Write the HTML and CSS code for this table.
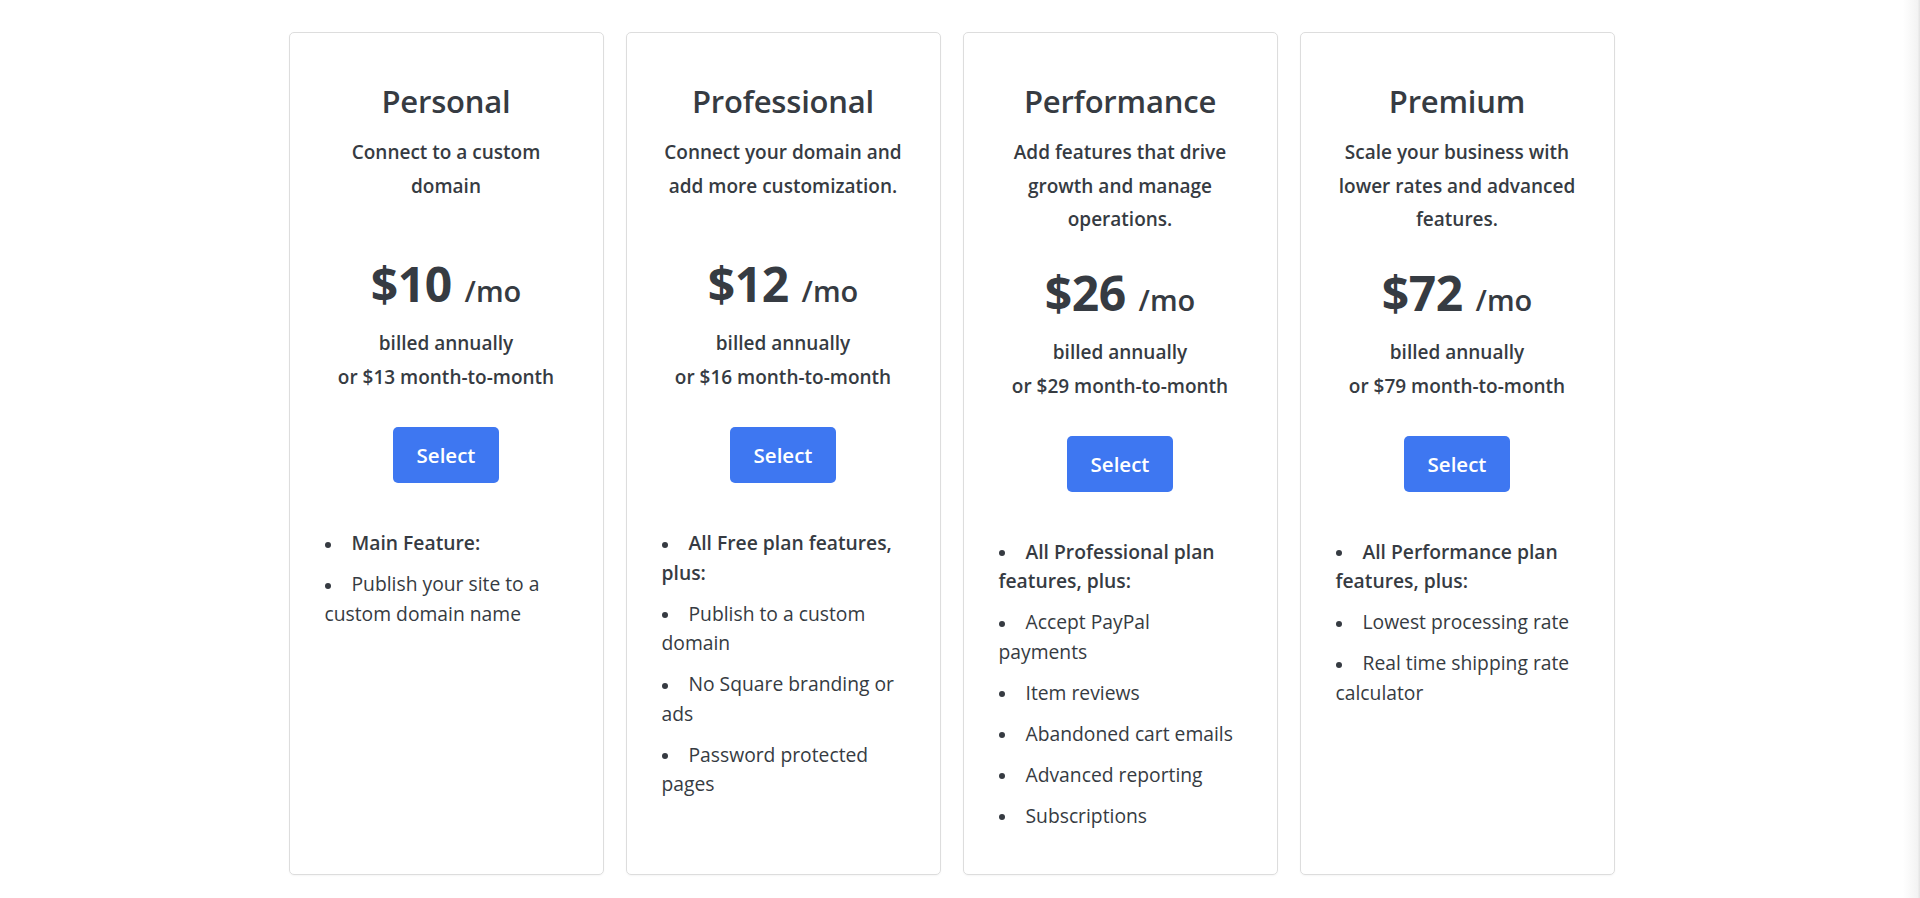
FILE: index.html
```html
<!DOCTYPE html>
<html lang="en">
<head>
<meta charset="utf-8">
<title>Pricing</title>
<link rel="stylesheet" href="styles.css">
</head>
<body>
<div class="page">
  <main class="main">
    <section class="plans">
      <article class="card">
        <h2 class="title">Personal</h2>
        <p class="desc">Connect to a custom domain</p>
        <div class="price"><span class="amount">$10</span><span class="per">/mo</span></div>
        <p class="billing">billed annually<br>or $13 month-to-month</p>
        <button class="btn">Select</button>
        <ul class="features">
          <li class="strong">Main Feature:</li>
          <li>Publish your site to a custom domain name</li>
        </ul>
      </article>
      <article class="card">
        <h2 class="title">Professional</h2>
        <p class="desc">Connect your domain and add more customization.</p>
        <div class="price"><span class="amount">$12</span><span class="per">/mo</span></div>
        <p class="billing">billed annually<br>or $16 month-to-month</p>
        <button class="btn">Select</button>
        <ul class="features">
          <li class="strong">All Free plan features, plus:</li>
          <li>Publish to a custom domain</li>
          <li>No Square branding or ads</li>
          <li>Password protected pages</li>
        </ul>
      </article>
      <article class="card">
        <h2 class="title">Performance</h2>
        <p class="desc">Add features that drive growth and manage operations.</p>
        <div class="price"><span class="amount">$26</span><span class="per">/mo</span></div>
        <p class="billing">billed annually<br>or $29 month-to-month</p>
        <button class="btn">Select</button>
        <ul class="features">
          <li class="strong">All Professional plan features, plus:</li>
          <li>Accept PayPal payments</li>
          <li>Item reviews</li>
          <li>Abandoned cart emails</li>
          <li>Advanced reporting</li>
          <li>Subscriptions</li>
        </ul>
      </article>
      <article class="card">
        <h2 class="title">Premium</h2>
        <p class="desc">Scale your business with lower rates and advanced features.</p>
        <div class="price"><span class="amount">$72</span><span class="per">/mo</span></div>
        <p class="billing">billed annually<br>or $79 month-to-month</p>
        <button class="btn">Select</button>
        <ul class="features">
          <li class="strong">All Performance plan features, plus:</li>
          <li>Lowest processing rate</li>
          <li>Real time shipping rate calculator</li>
        </ul>
      </article>
    </section>
  </main>
  <div class="scrollbar"></div>
</div>
</body>
</html>
```

FILE: styles.css
```css
* { box-sizing: border-box; }

html, body {
  margin: 0;
  padding: 0;
  height: 100%;
  background: #ffffff;
}

body {
  font-family: "Open Sans", "Liberation Sans", sans-serif;
  color: #363b42;
  overflow: hidden;
}

.page {
  display: flex;
  height: 898px;
}

.main {
  flex: 1;
  padding-top: 32px;
}

.scrollbar {
  width: 17px;
  background: linear-gradient(to right, #ffffff 0%, #f3f3f3 85%, #e2e2e2 100%);
}

.plans {
  display: flex;
  justify-content: center;
  gap: 22px;
  align-items: stretch;
}

.card {
  width: 315px;
  border: 1px solid #dddddd;
  border-radius: 5px;
  padding: 48px 35px 32px;
  display: flex;
  flex-direction: column;
  align-items: center;
  text-align: center;
  box-shadow: 0 1px 2px rgba(0, 0, 0, 0.04);
}

.title {
  margin: 0;
  font-size: 31px;
  font-weight: 600;
  line-height: 40px;
  letter-spacing: -0.2px;
}

.desc {
  margin: 15px 0 0;
  font-size: 19px;
  font-weight: 600;
  line-height: 33.5px;
  min-height: 92px;
  width: 100%;
}

.price {
  margin-top: 27px;
  height: 58px;
  line-height: 58px;
  white-space: nowrap;
}

.amount {
  font-size: 48px;
  font-weight: 700;
  letter-spacing: -0.5px;
}

.per {
  font-size: 29px;
  font-weight: 600;
  margin-left: 13px;
}

.billing {
  margin: 13px 0 0;
  font-size: 19px;
  font-weight: 600;
  line-height: 34px;
}

.btn {
  margin-top: 33px;
  width: 106px;
  height: 56px;
  border: 0;
  border-radius: 5px;
  background: #3e77f1;
  color: #ffffff;
  font-family: inherit;
  font-size: 20.5px;
  font-weight: 600;
  cursor: pointer;
}

.features {
  list-style: none;
  margin: 45px 0 0;
  padding: 0;
  width: 100%;
  text-align: left;
  font-size: 19.3px;
  line-height: 29.5px;
}

.features li {
  margin-bottom: 11.5px;
}

.features li::before {
  content: "";
  display: inline-block;
  width: 6px;
  height: 6px;
  border-radius: 50%;
  background: currentColor;
  margin-right: 21px;
  vertical-align: middle;
}

.features li.strong {
  font-weight: 600;
}
```
